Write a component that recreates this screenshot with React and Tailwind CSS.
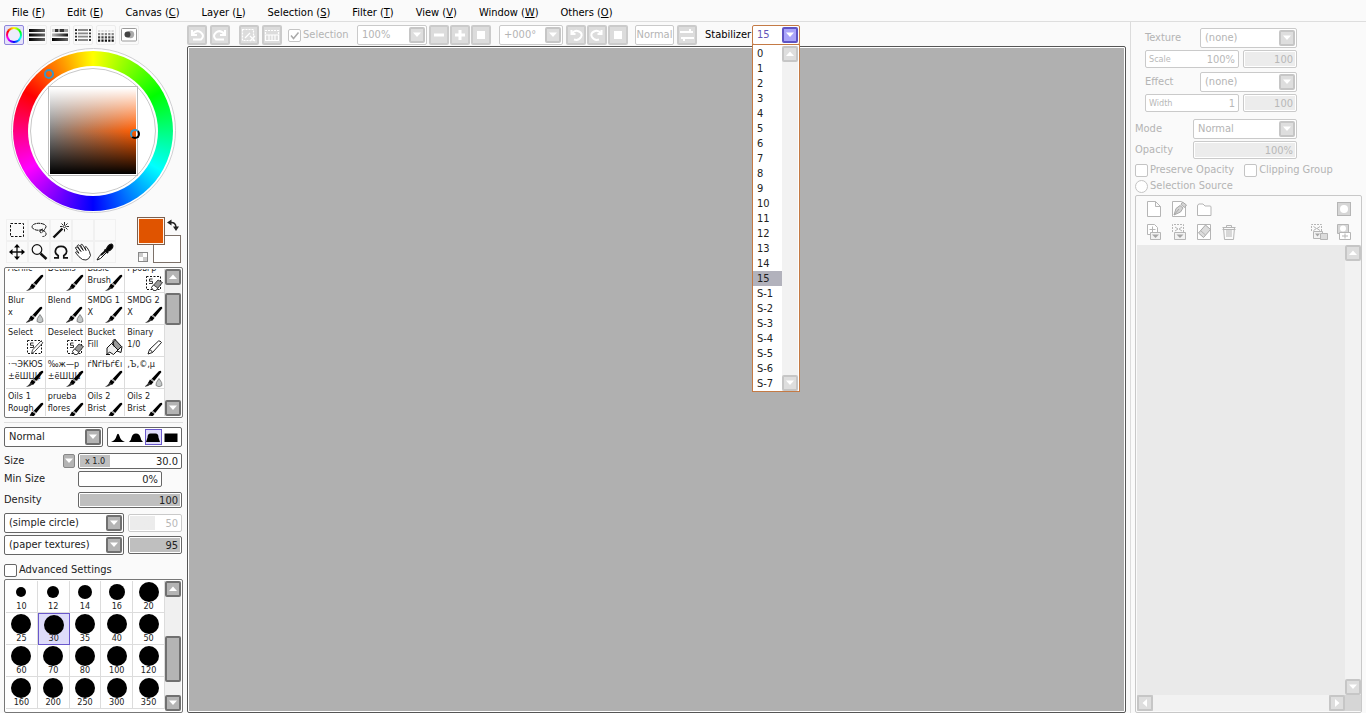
import React from "react";
import { clsx } from "clsx";

const MENUS = [
  ["File", "F"], ["Edit", "E"], ["Canvas", "C"], ["Layer", "L"], ["Selection", "S"],
  ["Filter", "T"], ["View", "V"], ["Window", "W"], ["Others", "O"],
];

const STABILIZER = [
  ...Array.from({ length: 16 }, (_, i) => String(i)),
  "S-1", "S-2", "S-3", "S-4", "S-5", "S-6", "S-7",
];

const BRUSHES = [
  ["Acrilic", "", "brush"], ["Details", "", "brush"], ["Basic", "Brush", "brush"], ["Грбвґр", "", "deselect"],
  ["Blur", "x", "drop"], ["Blend", "", "drop"], ["SMDG 1", "X", "brush"], ["SMDG 2", "X", "brush"],
  ["Select", "", "select"], ["Deselect", "", "deselect"], ["Bucket", "Fill", "bucket"], ["Binary", "1/0", "pencil"],
  ["·¬ЭКЮЅ", "±ёШЦЏ", "brush"], ["‰ж—р", "±ёШЦЏ", "brush"], ["ѓNѓЊѓ€ı", "", "brush"], ["‚Ъ‚©‚µ", "", "drop"],
  ["Oils 1", "Rough", "brush"], ["prueba", "flores", "brush"], ["Oils 2", "Brist", "brush"], ["Oils 2", "Brist", "brush"],
];

const SIZES = [
  [10, 5], [12, 6], [14, 7], [16, 8], [20, 10], [25, 10], [30, 10], [35, 10], [40, 10], [50, 10],
  [60, 10], [70, 10], [80, 10], [100, 10], [120, 10], [160, 10], [200, 10], [250, 10], [300, 10], [350, 10],
];

function Triangle({ dir = "down", color = "#fff" }) {
  const d = {
    down: "M2 3.5h8L6 8z",
    up: "M2 8h8L6 3.5z",
    left: "M8 2v8L3.5 6z",
    right: "M4 2v8L8.5 6z",
  }[dir];
  return (
    <svg viewBox="0 0 12 12" className="size-3 shrink-0" aria-hidden="true">
      <path d={d} fill={color} />
    </svg>
  );
}

function ArrowBox({ dir, tone = "dark" }) {
  return (
    <span
      className={clsx(
        "flex size-4 shrink-0 items-center justify-center rounded-xs border-2",
        tone === "dark" && "border-[#707070] bg-[#b4b4b4]",
        tone === "light" && "border-[#c6c6c6] bg-[#dedede]",
        tone === "violet" && "border-[#5f54c4] bg-[#a9a4fa]",
      )}
    >
      <Triangle dir={dir} />
    </span>
  );
}

function Select({ label, value, className, tone = "dark" }) {
  return (
    <span
      className={clsx(
        "relative flex h-5 items-center rounded-xs border bg-white",
        tone === "dark" && "border-[#666] text-[#222]",
        tone === "light" && "border-[#cacaca] text-[#b4b4b4]",
        tone === "violet" && "border-[#c47a45] text-[#6456b8]",
        className,
      )}
    >
      <select
        aria-label={label}
        defaultValue={value}
        className="h-full w-full appearance-none truncate bg-transparent pr-5 pl-1 outline-none"
      >
        <option>{value}</option>
      </select>
      <span className="pointer-events-none absolute right-px">
        <ArrowBox dir="down" tone={tone} />
      </span>
    </span>
  );
}

function ValueBox({ id, label, value, className, light, fill, tag }) {
  return (
    <span
      className={clsx(
        "flex items-center rounded-xs border bg-white p-px",
        light ? "border-[#cacaca] text-[#b8b8b8]" : "border-[#666] text-[#222]",
        className,
      )}
    >
      {tag && (
        <span className={clsx("flex h-full items-center text-[9px] leading-none", light ? "pl-0.5" : "w-[30px] shrink-0 justify-center bg-[#bfbfbf]")}>
          {tag}
        </span>
      )}
      <input
        id={id}
        aria-label={label}
        defaultValue={value}
        className={clsx(
          "h-full w-full min-w-0 pr-0.5 text-right outline-none",
          !fill && "bg-transparent",
          fill === "dark" && "bg-[#bfbfbf]",
          fill === "light" && "bg-[#ececec]",
          fill === "half" && "bg-linear-to-r from-[#ececec] from-50% to-white to-50%",
        )}
      />
    </span>
  );
}

function ScrollBar({ tone = "dark", children }) {
  return (
    <div className={clsx("flex w-4 shrink-0 flex-col", tone === "dark" ? "bg-[#f0f0f0]" : "bg-[#f2f2f2]")}>
      <button aria-label="Scroll up"><ArrowBox dir="up" tone={tone} /></button>
      <div className="flex min-h-0 flex-1 flex-col">{children}</div>
      <button aria-label="Scroll down"><ArrowBox dir="down" tone={tone} /></button>
    </div>
  );
}

/* ---------- icons ---------- */

function BrushIcon({ kind }) {
  return (
    <svg viewBox="0 0 18 18" className="size-4.5" aria-hidden="true">
      {(kind === "brush" || kind === "drop") && (
        <g transform={kind === "drop" ? "translate(-1 0)" : ""}>
          <path d="M7 9.500 14.800 1.200q2.400-1.200 2.500 1L9.800 11.500z" fill="#000" />
          <path d="M6 9.500l3.500 2.500L7 15 4 13z" fill="#000" />
          <path d="M7.200 8.800l3 2.600" stroke="#fff" strokeWidth=".8" />
          <path d="M4.500 12.500q1.700.5 2 2Q4 16.500 0 17 3 15 4.500 12.500z" fill="#333" />
        </g>
      )}
      {kind === "drop" && (
        <path d="M14 8.500q3.700 4.500 3 7-3 2.500-6 0-.7-2.500 3-7z" fill="#c4c8c8" stroke="#777" strokeWidth=".8" />
      )}
      {(kind === "select" || kind === "deselect") && (
        <g fill="none" stroke="#111">
          <rect x="1.500" y="2.500" width="14" height="13" strokeDasharray="2 1.500" />
          <path d="M7.500 5H4.500v2.300h3v2.200H4" stroke="#333" />
        </g>
      )}
      {kind === "select" && <path d="M5.500 15.500l1-3.500 8.500-9 1.800 1.800-8.500 9z" fill="#fff" stroke="#333" strokeWidth=".9" />}
      {kind === "deselect" && (
        <g stroke="#333" strokeWidth=".9">
          <path d="M6.500 13.500l6.500-7.500 4.500 2.500-6.500 8H8.500z" fill="#999" />
          <path d="M6.500 13.500l2-2.500 4.300 3-1.800 2.500H8.500z" fill="#fff" />
        </g>
      )}
      {kind === "bucket" && (
        <g stroke="#111">
          <path d="M2 16.500V10l4.500-4.500L13 12l-4.500 4.500-4-2.500z" fill="#eee" />
          <path d="M6.500 5.500l4-3.500 6 6.500L13 12z" fill="#999" />
          <path d="M1 16.500h4M11 2q-3-1.500-3 1.500l1 5M12 13l4 1.500 1-6" fill="none" />
        </g>
      )}
      {kind === "pencil" && (
        <path d="M3 16l1.500-4.500L13.500 3q1.500-.5 3 1.500L7.500 14.500z M4.500 11.500q2 .5 3 3" fill="#fff" stroke="#222" />
      )}
    </svg>
  );
}

function ToolIcon({ kind }) {
  return (
    <svg viewBox="0 0 18 18" className="size-4.5" fill="none" stroke="#111" strokeWidth="1.200" aria-hidden="true">
      {kind === "marquee" && <rect x="2.500" y="2.500" width="13" height="13" strokeWidth="1" strokeDasharray="2.500 1.500" />}
      {kind === "lasso" && (
        <path d="M13 8Q8 10.500 3.500 8 .5 5.500 3.500 3.500q5-2.500 11 0 2.500 1.500 1 3.500l-2 3q-2.500 3-3.500 1t3.500-1.500q3 2 2.500 4-.5 2-3.500 2" strokeWidth="1" strokeDasharray="4 .6" />
      )}
      {kind === "wand" && (
        <g>
          <path d="M1.500 16.500L10.500 7.500" strokeWidth="2.400" />
          <path d="M12.500 1v3M12.500 8v2.500M8 5.500h2.500M14.500 5.500H17M9.500 2.500l1.500 1.500M15.500 2.500L14 4M15.500 8.500L14 7" strokeWidth=".9" />
          <circle cx="12.500" cy="5.500" r="1.200" strokeWidth=".8" />
        </g>
      )}
      {kind === "move" && (
        <g>
          <path d="M9 3v12M3 9h12" strokeWidth="1.300" />
          <path d="M9 1l3 3.500H6zM9 17l3-3.500H6zM1 9l3.500-3v6zM17 9l-3.500-3v6z" fill="#000" stroke="none" />
        </g>
      )}
      {kind === "zoom" && (
        <g>
          <circle cx="7" cy="6.500" r="4.800" />
          <path d="M10.500 10.500l6 5.500" strokeWidth="2.600" />
        </g>
      )}
      {kind === "rotate" && (
        <path d="M2 14.800h4.200v-2.300Q3.300 11.500 3.300 8.300 3.800 3.300 9 3.300t5.700 5q0 3-2.900 4.200v2.300H16" strokeWidth="1.700" />
      )}
      {kind === "hand" && (
        <path d="M8.500 16.500Q5 14.500 1.500 9.500q.5-1.700 3.500.8L1.500 5q.2-2 2-.5L7 8.500 3.300 2.800q.6-1.900 2.200-.3L9.300 7.500 6.500 2q1.300-1.500 2.500.3L12 7.500 10.800 4.200q1-1.500 2.200.3Q16 8.500 16.500 12.500q-1.500 4-4.500 4.500z" fill="#fff" strokeWidth=".9" />
      )}
      {kind === "picker" && (
        <g>
          <path d="M1 17l2-3.500 6.500-6 1.500 1.500-6.500 6.500z" fill="#fff" strokeWidth="1" />
          <path d="M8.500 6.500l3.500 3.500M5 12l4.500-4" strokeWidth="2" />
          <path d="M10 7q2-5.500 5.500-6 2.500 1.500.5 4.500-1.500 2-4.500 3z" fill="#000" />
        </g>
      )}
    </svg>
  );
}

function BarIcon({ kind }) {
  const stroke = "url(#bar-fade)";
  return (
    <svg viewBox="0 0 16 14" className="h-3.5 w-4" aria-hidden="true">
      <defs>
        <linearGradient id="bar-fade" gradientUnits="userSpaceOnUse" x1="0" y1="0" x2="16" y2="0">
          <stop offset="0" stopColor="#000" />
          <stop offset="1" stopColor="#666" />
        </linearGradient>
        <linearGradient id="bar-light" gradientUnits="userSpaceOnUse" x1="0" y1="0" x2="16" y2="0">
          <stop offset="0" stopColor="#bbb" />
          <stop offset="1" stopColor="#111" />
        </linearGradient>
      </defs>
      {kind === "rgb" && <path d="M0 1h16v3H0zM0 5.500h16v3H0zM0 10h16v3H0z" fill={stroke} />}
      {kind === "hsv" && (
        <g>
          <path d="M0 1h3v3H0z" fill="#ccc" />
          <path d="M3 1h3v3H3zM8 1h4v3H8z" fill="#333" />
          <path d="M6 1h2v3H6zM12 1h4v3h-4z" fill="#999" />
          <path d="M0 5.500h16v3H0z" fill="url(#bar-light)" />
          <path d="M0 10h16v3H0z" fill={stroke} />
        </g>
      )}
      {kind === "mixer" && (
        <g stroke="#888" strokeWidth="1.800">
          <path d="M3 2h10M3 5.300h10M3 8.600h10M3 12h10" />
          <path d="M0 2h2M0 5.300h2M0 8.600h2M0 12h2M14 2h2M14 5.300h2M14 8.600h2M14 12h2" stroke="#333" />
        </g>
      )}
      {kind === "swatch" && (
        <g strokeWidth="2.200" strokeDasharray="2.200 1.200">
          <path d="M0 3h16" stroke="#ddd" />
          <path d="M0 6.200h16" stroke="#888" />
          <path d="M0 9.400h16" stroke="#444" />
          <path d="M0 12.600h16" stroke="#111" />
        </g>
      )}
      {kind === "pad" && (
        <g>
          <rect x=".5" y=".5" width="15" height="12.500" rx="1" fill="#fff" stroke="#999" />
          <circle cx="9.500" cy="6.500" r="3.700" fill="#aaa" />
          <circle cx="6.500" cy="6.500" r="3" fill="#444" />
        </g>
      )}
    </svg>
  );
}

function ToolbarIcon({ kind }) {
  return (
    <svg viewBox="0 0 16 16" className="size-4 shrink-0" fill="none" stroke="#fff" strokeWidth="2" aria-hidden="true">
      {kind === "undo" && <path d="M3 3v5h5M3 7.500Q8 2 12 5.500t0 7H4" />}
      {kind === "redo" && <path d="M13 3v5H8M13 7.500Q8 2 4 5.500t0 7h8" />}
      {kind === "deselect" && (
        <g strokeWidth="1.200">
          <rect x="1.500" y="2.500" width="11" height="11" strokeDasharray="2 1" />
          <path d="M4 11l5-5M9 9l5 5M14 9l-5 5" />
        </g>
      )}
      {kind === "invert" && (
        <g strokeWidth="1.200">
          <path d="M1.500 7V3.500h13V7" strokeDasharray="2 1" />
          <path d="M1.500 13.500V8h13v5.500zM5 8v5M8 8v5M11 8v5" />
        </g>
      )}
      {kind === "minus" && <path d="M3 8h10" strokeWidth="3" />}
      {kind === "plus" && <path d="M3 8h10M8 3v10" strokeWidth="3" />}
      {kind === "stop" && <rect x="5" y="5" width="6" height="6" fill="#fff" />}
      {kind === "ccw" && <path d="M3.500 3v4h4M4 6.500Q7 2.500 11 4.500t2 5.500q-2.500 4-7 2.500" />}
      {kind === "cw" && <path d="M12.500 3v4h-4M12 6.500Q9 2.500 5 4.500T3 10q2.500 4 7 2.500" />}
      {kind === "flip" && <path d="M1 5h13M11 2v3M2 11h13M5 11v3" />}
    </svg>
  );
}

function GreyButton({ kind, label }) {
  return (
    <button aria-label={label} className="flex size-5 shrink-0 items-center justify-center rounded-xs border-2 border-[#cbcbcb] bg-[#dcdcdc]">
      <ToolbarIcon kind={kind} />
    </button>
  );
}

function LayerIcon({ kind }) {
  return (
    <svg viewBox="0 0 18 18" className="size-4.5" fill="none" stroke="#b5b5b5" aria-hidden="true">
      {kind === "new" && <path d="M2.500 1.500h8l5 5v10h-13zM10.500 1.500v5h5" fill="#fff" />}
      {kind === "linework" && (
        <g>
          <path d="M2.500 1.500h9l4 4v11h-13z" fill="#fff" />
          <path d="M4 15l2-6.500 4-3 3 2.500-2.500 4zM4 15l5-6M11 4.500l1.500-2.500 4 3-2 2.500z" fill="#d4d4d4" stroke="#a8a8a8" />
        </g>
      )}
      {kind === "folder" && <path d="M2.500 15.500V6q0-1.500 1.500-2h4l2 2h5q1 0 1 1v8.500z" fill="#fff" />}
      {kind === "mask" && (
        <g>
          <rect x="2.500" y="2.500" width="13" height="13" fill="#d6d6d6" />
          <circle cx="9" cy="9" r="4" fill="#fff" stroke="none" />
        </g>
      )}
      {kind === "transfer" && (
        <g>
          <path d="M2.500 1.500h7l3 3v7h-10z" fill="#fff" />
          <path d="M4.500 6.500h6M7.500 3.500v6" />
          <path d="M5.500 9.500h10v7h-10z" fill="#f2f2f2" />
          <path d="M7 11.500h7l-3.500 3.500z" fill="#a5a5a5" stroke="none" />
        </g>
      )}
      {kind === "merge" && (
        <g>
          <path d="M2.500 9V1.500h11V9" strokeDasharray="2 1" />
          <path d="M5 4l3 2-3 2M12 4L9 6l3 2" />
          <path d="M4.500 9.500h11v7h-11z" fill="#f2f2f2" />
          <path d="M6.500 11.500h7l-3.500 3.500z" fill="#a5a5a5" stroke="none" />
        </g>
      )}
      {kind === "clear" && (
        <g>
          <path d="M2.500 1.500h13v15h-13z" fill="#fff" />
          <path d="M3.500 10l7-8 5 4.500-7 8z" fill="#dcdcdc" stroke="#a8a8a8" />
          <path d="M5.500 7.500l5 4.500" />
        </g>
      )}
      {kind === "trash" && (
        <path d="M2.500 4.500h13M6.500 4.500v-2h5v2M3.500 4.500l1 12h9l1-12M7 7v7M9 7v7M11 7v7M2.500 6.500h13" />
      )}
      {kind === "applymask" && (
        <g>
          <path d="M1.500 8V1.500h10V8" strokeDasharray="2 1" />
          <path d="M3.500 3.500l3 2-3 2M10 3.500l-3 2 3 2" />
          <path d="M3.500 8.500h9v7h-9z" fill="#f2f2f2" />
          <path d="M5 10.500h5l-2.500 3z" fill="#a5a5a5" stroke="none" />
          <path d="M10.500 10.500h7v6h-7z" fill="#dcdcdc" />
        </g>
      )}
      {kind === "addmask" && (
        <g>
          <path d="M2.500 1.500h11v9h-11z" fill="#d6d6d6" />
          <circle cx="8" cy="5.500" r="3" fill="#fff" stroke="none" />
          <path d="M4.500 9.500h11v7h-11z" fill="#fff" />
          <path d="M7 13h6M10 10.500v5" />
        </g>
      )}
    </svg>
  );
}

/* ---------- left column ---------- */

function ColorWheel() {
  return (
    <div className="relative mx-auto flex size-[165px] items-center justify-center rounded-full border border-[#cfcfd2] bg-white">
      <div className="flex size-40 items-center justify-center rounded-full bg-[conic-gradient(#ff0,#0f0_60deg,#0ff_120deg,#00f_180deg,#f0f_240deg,#f00_300deg,#ff0)]">
        <div className="flex size-[130px] items-center justify-center rounded-full bg-white p-0.5">
          <div className="flex size-full items-center justify-center rounded-full border border-[#c8c8c8]">
            <div className="border border-[#bdbdbd] p-px">
              <div className="size-[86px] bg-[linear-gradient(to_bottom,#fff,transparent_50%,#000),linear-gradient(to_right,#808080,#ff5c00)]" />
            </div>
          </div>
        </div>
      </div>
      <span className="absolute top-5 left-8 size-2.5 rounded-full border-2 border-[#3c96c4]" />
      <span className="absolute top-20 left-[118px] size-2.5 rounded-full border-2 border-t-[#3c96c4] border-r-black border-b-black border-l-[#3c96c4]" />
    </div>
  );
}

function ColorTabs() {
  return (
    <div className="flex gap-[3px] pl-1">
      <button aria-label="Color wheel" className="flex size-5 items-center justify-center rounded-xs border border-[#8f86dc] bg-[#e4e2fa]">
        <span className="flex size-4 items-center justify-center rounded-full bg-[conic-gradient(#ff0,#0f0_60deg,#0ff_120deg,#00f_180deg,#f0f_240deg,#f00_300deg,#ff0)]">
          <span className="size-3 rounded-full bg-[#eeecfc]" />
        </span>
      </button>
      {[["rgb", "RGB sliders"], ["hsv", "HSV sliders"], ["mixer", "Color mixer"], ["swatch", "Swatches"], ["pad", "Scratch pad"]].map(([k, label]) => (
        <button key={k} aria-label={label} className="flex size-5 items-center justify-center rounded-xs border border-[#ececec]">
          <BarIcon kind={k} />
        </button>
      ))}
    </div>
  );
}

function Tools() {
  const tools = ["marquee", "lasso", "wand", "", "", "move", "zoom", "rotate", "hand", "picker"];
  return (
    <div className="flex justify-between pr-0.5 pl-1.5">
      <div className="grid grid-cols-5">
        {tools.map((t, i) => (
          <button key={i} aria-label={t || "Empty slot"} className="flex size-[22px] items-center justify-center border border-[#f1f1f1]">
            {t && <ToolIcon kind={t} />}
          </button>
        ))}
      </div>
      <div className="relative h-11 w-11">
        <button aria-label="Secondary color" className="absolute right-0 bottom-0 size-7 border border-[#7c7068] bg-white" />
        <button aria-label="Primary color" className="absolute -top-0.5 left-0 size-7 border border-[#7c6050] bg-[#e05400] outline-1 -outline-offset-2 outline-[#fff3e8]" />
        <button aria-label="Swap colors" className="absolute top-0 right-0.5">
          <svg viewBox="0 0 12 12" className="size-3" aria-hidden="true">
            <path d="M3.500 3.500Q8.500 3 9 8" fill="none" stroke="#222" strokeWidth="1.500" />
            <path d="M0 3.500L4.500.5v6zM9 12L6 7.500h6z" fill="#222" />
          </svg>
        </button>
        <button aria-label="Transparent color" className="absolute bottom-px left-px size-2.5 border border-[#888] bg-[conic-gradient(#fff_90deg,#ccc_90deg_180deg,#fff_180deg_270deg,#ccc_270deg)]" />
      </div>
    </div>
  );
}

function BrushList() {
  return (
    <div className="flex h-[151px] rounded-xs border border-[#777] bg-white p-px">
      <div className="min-w-0 flex-1 overflow-hidden">
        <div className="-mt-2 grid grid-cols-4">
          {BRUSHES.map(([a, b, kind], i) => (
            <button key={i} className="relative flex h-8 flex-col overflow-hidden border-r border-b border-[#dcdcdc] pt-px pl-0.5 text-left text-[9px] leading-3 whitespace-nowrap">
              <span className="h-3">{a}</span>
              <span className="h-3">{b}</span>
              <span className="absolute right-px bottom-0"><BrushIcon kind={kind} /></span>
            </button>
          ))}
        </div>
      </div>
      <ScrollBar>
        <div className="mt-2 h-8 rounded-xs border-2 border-[#707070] bg-[#b4b4b4]" />
      </ScrollBar>
    </div>
  );
}

function BrushShapes() {
  const shapes = [
    "M0 12Q4.500 10.500 5.500 6q1.500-4.500 3 0 1 4.500 5.500 6z",
    "M0 12q2-1 2.500-4.500 1-4 4.500-4t4.500 4Q12 11 14 12z",
    "M0 12l1.500-4.500q0-4 3-4h5q3 0 3 4L14 12z",
    "M.500 3.500h13V12H.500z",
  ];
  return (
    <div className="flex h-5 items-center justify-between rounded-xs border border-[#666] bg-white px-px">
      {shapes.map((d, i) => (
        <button key={i} aria-label={`Edge shape ${i + 1}`} className={clsx("flex h-4 w-[18px] items-center justify-center border", i === 2 ? "border-[#6a58cc] bg-[#e0dcfa]" : "border-transparent")}>
          <svg viewBox="0 0 14 14" className="h-3.5 w-3.5 shrink-0" aria-hidden="true"><path d={d} fill="#000" /></svg>
        </button>
      ))}
    </div>
  );
}

function SizeGrid() {
  return (
    <div className="flex min-h-0 flex-1 rounded-xs border border-[#777] bg-white p-px">
      <div className="min-w-0 flex-1 overflow-hidden">
        <div className="grid grid-cols-5">
          {SIZES.map(([n, r]) => (
            <button
              key={n}
              className={clsx(
                "relative flex h-8 flex-col items-center justify-end text-[9px] leading-[11px]",
                n === 30 ? "border border-[#6a58cc] bg-[#dedcfa]" : "border-r border-b border-[#dcdcdc]",
              )}
            >
              <svg viewBox="0 0 22 22" className="absolute top-0 size-[22px]" aria-hidden="true">
                <circle cx="11" cy="11" r={r} fill="#000" />
              </svg>
              <span className="relative">{n}</span>
            </button>
          ))}
          <span className="relative h-8">
            <span className="absolute top-0.5 left-1.5 size-5 rounded-full border border-[#4a7a9c] bg-[#c4dff0]" />
          </span>
        </div>
      </div>
      <ScrollBar>
        <div className="flex-[40]" />
        <div className="flex-[44] rounded-xs border-2 border-[#707070] bg-[#b4b4b4]" />
        <div className="flex-[13]" />
      </ScrollBar>
    </div>
  );
}

function LeftPanel() {
  return (
    <aside className="flex w-[187px] shrink-0 flex-col pt-[3px] pr-1">
      <ColorTabs />
      <div className="pt-[3px] pl-[3px]"><ColorWheel /></div>
      <div className="pt-1.5"><Tools /></div>
      <div className="flex min-h-0 flex-1 flex-col pt-1 pl-1">
        <BrushList />
        <hr className="mt-1 mb-1 border-[#dedede]" />
        <div className="pr-px">
          <div className="grid grid-cols-[99px_75px] justify-between">
            <Select label="Blending mode" value="Normal" />
            <BrushShapes />
          </div>
          <div className="mt-1.5 flex items-center">
            <label htmlFor="size" className="flex-1">Size</label>
            <button aria-label="Size multiplier" className="mr-[3px] flex h-3.5 w-3 items-end justify-center rounded-xs border border-[#888] bg-[#b4b4b4]"><Triangle /></button>
            <ValueBox id="size" value="30.0" tag="x 1.0" className="h-4 w-26" />
          </div>
          <div className="mt-0.5 flex items-center">
            <label htmlFor="min-size" className="flex-1">Min Size</label>
            <ValueBox id="min-size" value="0%" className="mr-5 h-4 w-21" />
          </div>
          <div className="mt-[5px] flex items-center">
            <label htmlFor="density" className="flex-1">Density</label>
            <ValueBox id="density" value="100" fill="dark" className="h-4 w-26" />
          </div>
          <div className="mt-[5px] grid grid-cols-[120px_54px] items-center justify-between gap-y-0.5">
            <Select label="Brush shape" value="(simple circle)" />
            <ValueBox label="Shape strength" value="50" light fill="half" className="h-[18px]" />
            <Select label="Paper texture" value="(paper textures)" />
            <ValueBox label="Texture strength" value="95" fill="dark" className="h-[18px]" />
          </div>
        </div>
        <label className="mt-2 mb-0.5 flex items-center gap-0.5">
          <input type="checkbox" className="size-[13px] appearance-none rounded-xs border border-[#666] bg-white" />
          Advanced Settings
        </label>
        <SizeGrid />
      </div>
    </aside>
  );
}

/* ---------- centre ---------- */

function Stabilizer() {
  return (
    <div className="relative ml-[3px] w-12">
      <Select label="Stabilizer" value="15" tone="violet" />
      <div className="absolute top-[19px] left-0 z-10 flex w-full border border-[#c47a45] bg-white pt-px pr-px text-[#222]">
        <ul role="listbox" aria-label="Stabilizer level" className="flex-1">
          {STABILIZER.map((s) => (
            <li key={s} role="option" aria-selected={s === "15"} className={clsx("h-[15px] pl-1 leading-[15px]", s === "15" && "bg-[#b2b2bc]")}>
              {s}
            </li>
          ))}
        </ul>
        <ScrollBar tone="light" />
      </div>
    </div>
  );
}

function Toolbar() {
  return (
    <div className="flex h-6 items-center pt-0.5 text-[#b4b4b4]">
      <div className="flex gap-[3px]">
        <GreyButton kind="undo" label="Undo" />
        <GreyButton kind="redo" label="Redo" />
      </div>
      <div className="ml-[9px] flex gap-[3px]">
        <GreyButton kind="deselect" label="Deselect" />
        <GreyButton kind="invert" label="Invert selection" />
      </div>
      <label className="ml-1.5 flex w-16 items-center gap-0.5">
        <span className="relative flex size-[13px] shrink-0">
          <input type="checkbox" defaultChecked className="size-full appearance-none rounded-xs border border-[#c4c4c4] bg-white" />
          <svg viewBox="0 0 13 13" className="pointer-events-none absolute inset-0 size-full" aria-hidden="true">
            <path d="M3 6.500l2.500 3 5-6" fill="none" stroke="#aaa" strokeWidth="1.500" />
          </svg>
        </span>
        Selection
      </label>
      <Select label="Zoom" value="100%" tone="light" className="ml-[5px] w-[70px]" />
      <div className="ml-0.5 flex gap-px">
        <GreyButton kind="minus" label="Zoom out" />
        <GreyButton kind="plus" label="Zoom in" />
        <GreyButton kind="stop" label="Reset zoom" />
      </div>
      <Select label="Rotation" value="+000°" tone="light" className="ml-2 w-16" />
      <div className="ml-[3px] flex gap-px">
        <GreyButton kind="ccw" label="Rotate left" />
        <GreyButton kind="cw" label="Rotate right" />
        <GreyButton kind="stop" label="Reset rotation" />
      </div>
      <button className="ml-[7px] flex h-5 w-[39px] items-center justify-center rounded-xs border border-[#cacaca] bg-white">Normal</button>
      <div className="ml-[3px]"><GreyButton kind="flip" label="Flip view" /></div>
      <span className="ml-2 w-11 text-black">Stabilizer</span>
      <Stabilizer />
    </div>
  );
}

/* ---------- right column ---------- */

function LayerButton({ kind, label, className }) {
  return <button aria-label={label} className={className}><LayerIcon kind={kind} /></button>;
}

function LayerList() {
  return (
    <div className="mt-0.5 mr-1 flex min-h-0 flex-1 flex-col rounded-xs border border-[#c8c8c8] py-px pl-px">
      <div className="flex flex-col gap-[5px] px-2 pt-[3px] pb-1">
        <div className="flex gap-[7px]">
          <LayerButton kind="new" label="New layer" />
          <LayerButton kind="linework" label="New linework layer" />
          <LayerButton kind="folder" label="New layer set" />
          <LayerButton kind="mask" label="Layer mask" className="ml-auto" />
        </div>
        <div className="flex gap-[7px]">
          <LayerButton kind="transfer" label="Transfer down" />
          <LayerButton kind="merge" label="Merge down" />
          <LayerButton kind="clear" label="Clear layer" />
          <LayerButton kind="trash" label="Delete layer" />
          <LayerButton kind="applymask" label="Apply mask" className="ml-auto" />
          <LayerButton kind="addmask" label="Add mask" />
        </div>
      </div>
      <div className="flex min-h-0 flex-1">
        <div className="flex-1 bg-[#eaeaea]" />
        <ScrollBar tone="light" />
      </div>
      <div className="flex bg-[#d6d6d6] pr-4">
        <button aria-label="Scroll left"><ArrowBox dir="left" tone="light" /></button>
        <div className="flex-1 bg-[#f2f2f2]" />
        <button aria-label="Scroll right"><ArrowBox dir="right" tone="light" /></button>
      </div>
    </div>
  );
}

function CheckItem({ type = "checkbox", children }) {
  return (
    <label className="flex items-center gap-0.5">
      <input type={type} className={clsx("size-[13px] appearance-none border border-[#c4c4c4] bg-white", type === "radio" ? "rounded-full" : "rounded-xs")} />
      {children}
    </label>
  );
}

function EffectGroup({ title, field, value }) {
  return (
    <div className="flex flex-col gap-0.5 pl-2.5">
      <div className="flex items-center">
        <span className="w-[55px]">{title}</span>
        <Select label={title} value="(none)" tone="light" className="w-[97px]" />
      </div>
      <div className="flex gap-1">
        <ValueBox label={field} value={value} tag={field} light className="h-[18px] w-[94px]" />
        <ValueBox label={`${title} strength`} value="100" light fill="light" className="h-[18px] w-[54px]" />
      </div>
    </div>
  );
}

function RightPanel() {
  return (
    <aside className="flex w-[236px] shrink-0 flex-col border-l border-[#dcdcdc] pt-1.5 pl-1 text-[#b4b4b4]">
      <div className="flex flex-col gap-1">
        <EffectGroup title="Texture" field="Scale" value="100%" />
        <EffectGroup title="Effect" field="Width" value="1" />
      </div>
      <div className="mt-[7px] flex items-center">
        <span className="w-[58px]">Mode</span>
        <Select label="Mode" value="Normal" tone="light" className="w-26" />
      </div>
      <div className="mt-0.5 flex items-center">
        <label htmlFor="opacity" className="w-[58px]">Opacity</label>
        <ValueBox id="opacity" value="100%" light fill="light" className="h-[18px] w-26" />
      </div>
      <div className="mt-1 flex gap-2.5">
        <CheckItem>Preserve Opacity</CheckItem>
        <CheckItem>Clipping Group</CheckItem>
      </div>
      <div className="mt-0.5"><CheckItem type="radio">Selection Source</CheckItem></div>
      <LayerList />
    </aside>
  );
}

export default function App() {
  return (
    <div className="flex h-screen min-w-[1100px] flex-col overflow-hidden bg-[#fafafa] font-['DejaVu_Sans_Condensed','DejaVu_Sans',sans-serif] text-[11px] leading-[14px] text-[#222]">
      <nav className="flex h-[22px] shrink-0 items-center gap-[22px] border-b border-[#dedede] pt-1 pl-3 text-black">
        {MENUS.map(([name, key]) => (
          <button key={name}>
            {name} (<span className="underline underline-offset-1">{key}</span>)
          </button>
        ))}
      </nav>
      <div className="flex min-h-0 flex-1">
        <LeftPanel />
        <main className="mr-1 flex min-w-0 flex-1 flex-col">
          <Toolbar />
          <div className="min-h-0 flex-1 rounded-xs border border-[#555] bg-white p-px">
            <div className="h-full bg-[#b0b0b0]" />
          </div>
        </main>
        <RightPanel />
      </div>
    </div>
  );
}
